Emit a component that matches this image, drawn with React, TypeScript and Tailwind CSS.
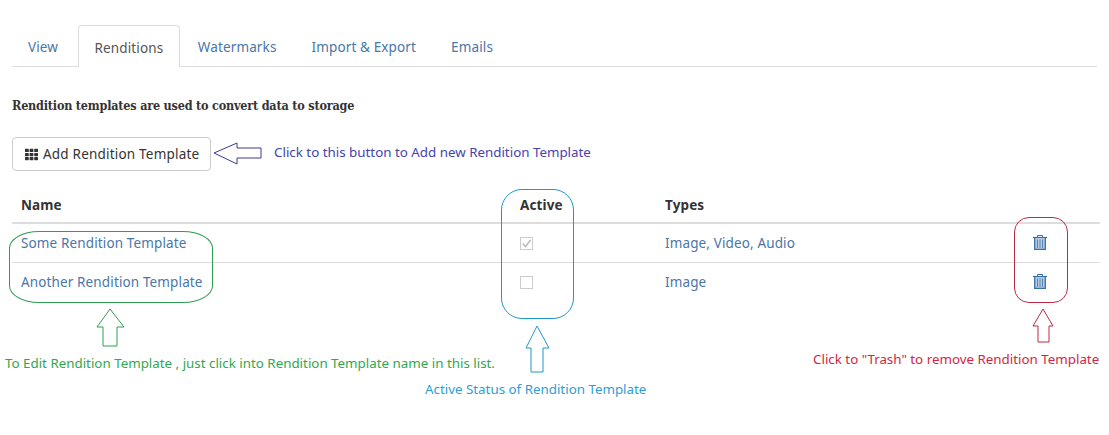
import { FaTh } from "react-icons/fa";

const tabs = ["View", "Renditions", "Watermarks", "Import & Export", "Emails"];

const rows = [
  { name: "Some Rendition Template", active: true, types: "Image, Video, Audio" },
  { name: "Another Rendition Template", active: false, types: "Image" },
];

function TrashIcon() {
  return (
    <svg width="14" height="15" viewBox="0 0 14 15" fill="none" className="block -mt-[2px]">
      <path d="M4.500 2.500V0.500h5v2" stroke="#3a70a8" strokeWidth="1" />
      <path d="M0 2.500h14" stroke="#3a70a8" strokeWidth="1.200" />
      <path d="M1.700 3v11.300h10.600V3" stroke="#3a70a8" strokeWidth="1.300" fill="#b4c9df" />
      <path d="M4.500 4.500v8.500M7 4.500v8.500M9.500 4.500v8.500" stroke="#5a88b8" strokeWidth="1" />
    </svg>
  );
}

function Arrow({ className, points, color, width, height }: { className: string; points: string; color: string; width: number; height: number }) {
  return (
    <svg width={width} height={height} viewBox={`0 0 ${width} ${height}`} fill="none" className={className}>
      <polygon points={points} stroke={color} strokeWidth="1" />
    </svg>
  );
}

export default function App() {
  return (
    <div className="relative w-[1109px] h-[435px] bg-white overflow-hidden px-3 pt-[25px] font-['Noto_Sans',sans-serif] text-[13.5px] tracking-[0.13px] text-[#333]">
      {/* Tabs */}
      <div className="flex h-[42px] border-b border-[#ddd]">
        {tabs.map((tab) =>
          tab === "Renditions" ? (
            <div key={tab} className="h-[42px] px-[16px] pt-[4px] flex items-center bg-white border border-[#ddd] border-b-white rounded-t-[4px] text-[#555]">
              {tab}
            </div>
          ) : (
            <div key={tab} className="h-[41px] px-[17.500px] pt-[4px] flex items-center text-[#4a76a8] first:pl-[16px] first:pr-[19.500px]">
              {tab}
            </div>
          )
        )}
      </div>

      <p className="mt-[30px] h-[18px] leading-[18px] text-[12.5px] font-bold font-['DejaVu_Serif_Condensed','DejaVu_Serif',serif] tracking-[-0.2px] text-[#333]">
        Rendition templates are used to convert data to storage
      </p>

      <div className="mt-[22px] flex items-center">
        <button className="w-[199px] h-[34px] flex items-center gap-[5px] pl-[12px] pt-[1px] border border-[#ccc] rounded-[4px] bg-white text-[#333] tracking-[0.2px]">
          <FaTh className="w-[13px] h-[13px] text-[#333]" />
          <span>Add Rendition Template</span>
        </button>
        <Arrow className="ml-[2px]" width={50} height={24} color="#3a3a90" points="1,11 24,1 24,6 48,6 48,16 24,16 24,22" />
        <span className="ml-[11px] pb-[4px] text-[13.35px] tracking-normal text-[#4444b0] whitespace-nowrap">Click to this button to Add new Rendition Template</span>
      </div>

      {/* Table */}
      <div className="mt-[17px] w-[1088px]">
        <div className="flex items-center h-[36px] pt-[1px] border-b-2 border-[#ddd] font-bold text-[#333]">
          <div className="w-[508px] pl-[9px]">Name</div>
          <div className="w-[145px]">Active</div>
          <div>Types</div>
        </div>
        {rows.map((row, i) => (
          <div key={row.name} className={`flex items-center text-[#4a76a8] ${i === 0 ? "h-[39px] border-b border-[#ddd]" : "h-[38px]"}`}>
            <div className="w-[508px] pl-[9px]">{row.name}</div>
            <div className="w-[145px]">
              <span className="w-[13px] h-[13px] border border-[#ccc] flex items-center justify-center">
                {row.active && (
                  <svg width="11" height="11" viewBox="0 0 11 11" fill="none">
                    <path d="M1.500 5.500l3 3 5-6.500" stroke="#bbb" strokeWidth="1.500" />
                  </svg>
                )}
              </span>
            </div>
            <div className="w-[368px]">{row.types}</div>
            <TrashIcon />
          </div>
        ))}
      </div>

      {/* Annotations */}
      <div className="absolute left-[9px] top-[231px] w-[204px] h-[72px] border border-[#2e9e50] rounded-[30px/17px]" />
      <div className="absolute left-[501px] top-[189px] w-[73px] h-[130px] border border-[#1f98c8] rounded-[21px]" />
      <div className="absolute left-[1014px] top-[217px] w-[54px] h-[86px] border border-[#b92a45] rounded-[15px]" />

      <Arrow className="absolute left-[96px] top-[308px]" width={30} height={39} color="#2e9e50" points="14,1 1,19 7,19 7,38 21,38 21,19 28,19" />
      <Arrow className="absolute left-[525px] top-[325px]" width={26} height={48} color="#1f98c8" points="12,1 1,23 6,23 6,47 18,47 18,23 24,23" />
      <Arrow className="absolute left-[1032px] top-[308px]" width={23} height={35} color="#b92a45" points="11,1 1,18 6,18 6,34 17,34 17,18 21,18" />

      <span className="absolute left-[5px] top-[354px] leading-[18px] text-[13.35px] tracking-normal text-[#2fa84f] whitespace-nowrap">To Edit Rendition Template , just click into Rendition Template name in this list.</span>
      <span className="absolute left-[425px] top-[380px] leading-[18px] text-[13.35px] tracking-normal text-[#2b9fd8] whitespace-nowrap">Active Status of Rendition Template</span>
      <span className="absolute left-[813px] top-[350px] leading-[18px] text-[13.35px] tracking-normal text-[#d5263f] whitespace-nowrap">Click to "Trash" to remove Rendition Template</span>
    </div>
  );
}
